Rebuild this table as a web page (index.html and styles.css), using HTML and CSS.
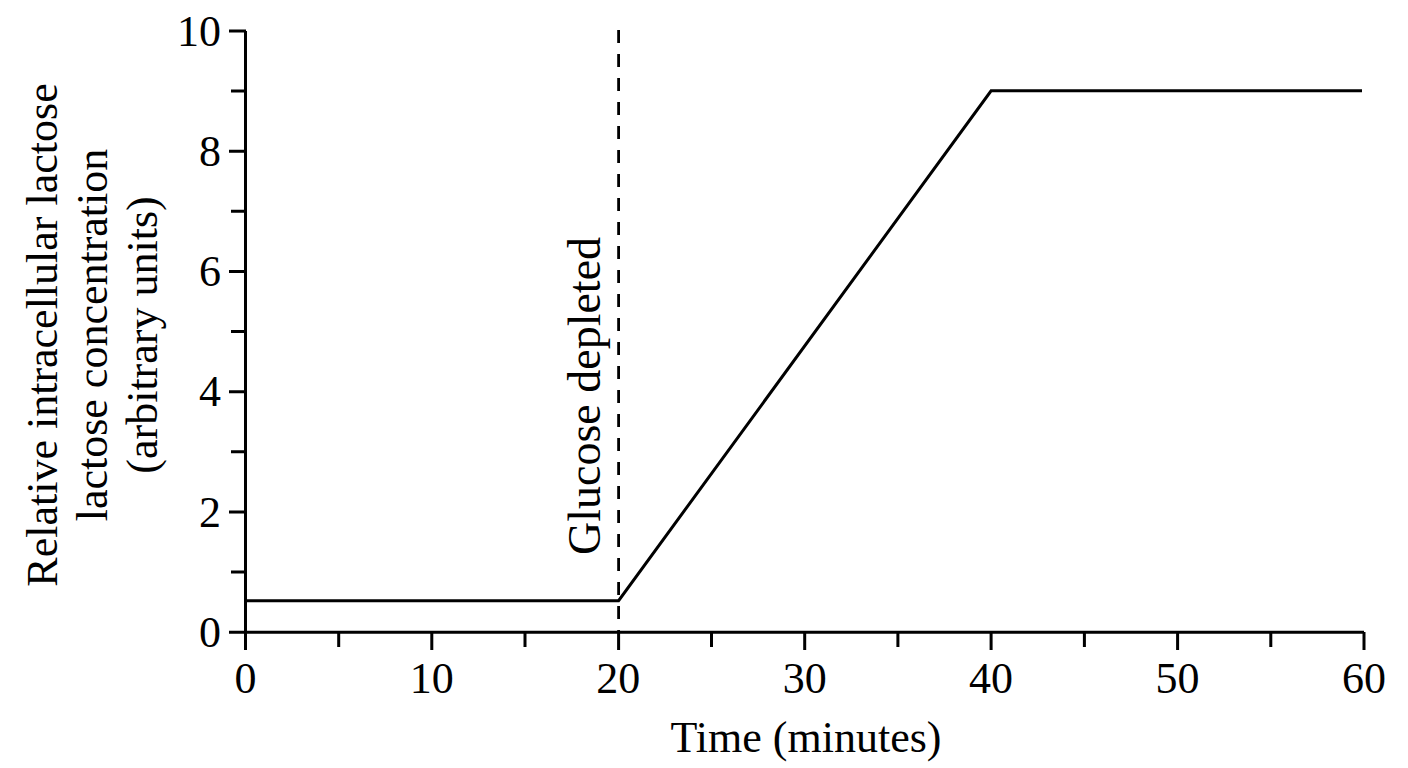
FILE: index.html
```html
<!DOCTYPE html>
<html>
<head>
<meta charset="utf-8">
<link rel="stylesheet" href="styles.css">
</head>
<body>
<div class="figure">
<svg class="chart" width="1408" height="768" viewBox="0 0 1408 768" xmlns="http://www.w3.org/2000/svg">
  <!-- axes -->
  <path class="axis" d="M245.5 31 V632.3 M229 632.3 H1364"/>
  <!-- y major ticks -->
  <path class="axis" d="M229 31 H246 M229 151.2 H246 M229 271.4 H246 M229 391.7 H246 M229 511.9 H246"/>
  <!-- y minor ticks -->
  <path class="axis" d="M231 91 H246 M231 211.3 H246 M231 331.5 H246 M231 451.8 H246 M231 572 H246"/>
  <!-- x major ticks -->
  <path class="axis" d="M245.5 632 V650 M431.8 632 V650 M618.6 632 V650 M804.7 632 V650 M991.1 632 V650 M1177.6 632 V650 M1364 632 V650"/>
  <!-- x minor ticks -->
  <path class="axis" d="M338.7 632 V647 M525 632 V647 M711.5 632 V647 M897.9 632 V647 M1084.4 632 V647 M1270.8 632 V647"/>
  <!-- dashed glucose line -->
  <path class="dash" d="M618.6 30 V632"/>
  <!-- data -->
  <polyline class="data" points="245.5,600.7 618.6,600.7 991.1,90.8 1362,90.8"/>

  <!-- y tick labels -->
  <g class="tick-y">
    <text x="221" y="46">10</text>
    <text x="221" y="166">8</text>
    <text x="221" y="286">6</text>
    <text x="221" y="406">4</text>
    <text x="221" y="527">2</text>
    <text x="221" y="647">0</text>
  </g>
  <!-- x tick labels -->
  <g class="tick-x">
    <text x="245.5" y="693">0</text>
    <text x="431.8" y="693">10</text>
    <text x="618.2" y="693">20</text>
    <text x="804.7" y="693">30</text>
    <text x="991.1" y="693">40</text>
    <text x="1177.6" y="693">50</text>
    <text x="1364" y="693">60</text>
  </g>

  <text class="title-x" x="806" y="752">Time (minutes)</text>

  <g transform="translate(0 335) rotate(-90)">
    <text class="title-y" x="0" y="57">Relative intracellular lactose</text>
    <text class="title-y" x="0" y="107">lactose concentration</text>
    <text class="title-y" x="0" y="157">(arbitrary units)</text>
  </g>

  <g transform="translate(600 555) rotate(-90)">
    <text class="note" x="0" y="0">Glucose depleted</text>
  </g>
</svg>
</div>
</body>
</html>
```

FILE: styles.css
```css
html, body {
  margin: 0;
  padding: 0;
  background: #ffffff;
}

.figure {
  width: 1408px;
  height: 768px;
  overflow: hidden;
}

.chart {
  display: block;
  font-family: "Liberation Serif", "Times New Roman", serif;
}

.axis {
  fill: none;
  stroke: #000;
  stroke-width: 3;
}

.dash {
  fill: none;
  stroke: #000;
  stroke-width: 2.8;
  stroke-dasharray: 13 11;
}

.data {
  fill: none;
  stroke: #000;
  stroke-width: 3;
  stroke-linejoin: miter;
}

.tick-y text {
  font-size: 44px;
  text-anchor: end;
  fill: #000;
}

.tick-x text {
  font-size: 44px;
  text-anchor: middle;
  fill: #000;
}

.title-x {
  font-size: 44px;
  text-anchor: middle;
  fill: #000;
}

.title-y {
  font-size: 44px;
  text-anchor: middle;
  fill: #000;
}

.note {
  font-size: 46px;
  text-anchor: start;
  fill: #000;
}
```
